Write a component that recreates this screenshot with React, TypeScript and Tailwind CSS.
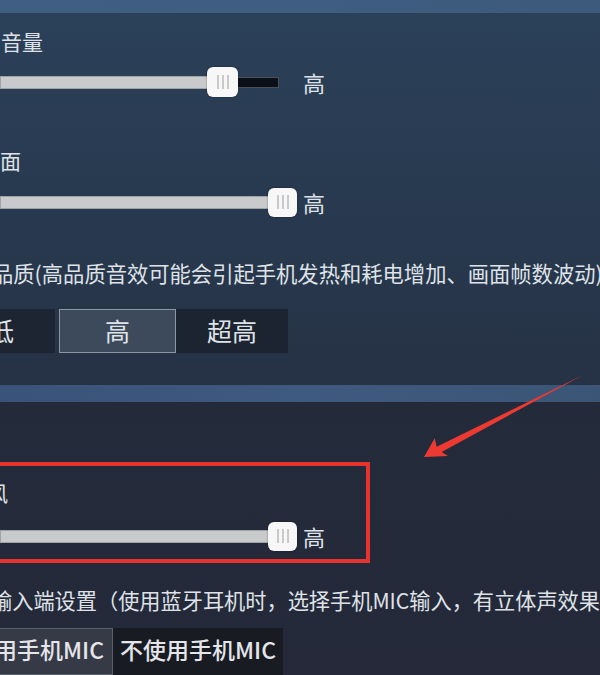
import React from "react";

const font = { fontFamily: '"Noto Sans CJK SC", "Noto Sans", sans-serif' };

function Thumb({ w, h }: { w: number; h: number }) {
  return (
    <div
      className="relative z-10 flex shrink-0 items-center justify-center gap-[3px] rounded-[6px] bg-[#f7f7f7] shadow-[0_0_2px_rgba(0,0,0,0.5)]"
      style={{ width: w, height: h }}
    >
      <div className="h-[14px] w-[2px] bg-[#c9c9c9]" />
      <div className="h-[14px] w-[2px] bg-[#c9c9c9]" />
      <div className="h-[14px] w-[2px] bg-[#c9c9c9]" />
    </div>
  );
}

function Label({ text, className = "" }: { text: string; className?: string }) {
  return (
    <div className={`flex h-[28px] items-center whitespace-nowrap leading-none text-[#dfe3e8] ${className}`}>
      {text}
    </div>
  );
}

function FullSlider() {
  return (
    <div className="flex h-[30px] items-center">
      <div className="-mr-[2px] h-[13px] w-[270px] shrink-0 border border-[#9ea3a8] bg-[#c8cacc]" />
      <Thumb w={29} h={29} />
      <div className="ml-[6px] text-[22px] leading-none text-[#dfe3e8]">高</div>
    </div>
  );
}

export default function App() {
  return (
    <div
      className="relative h-[675px] w-[600px] overflow-hidden bg-[#232a38]"
      style={font}
    >
      <div className="h-[13px] bg-gradient-to-r from-[#3f5f82] to-[#3d5a7c]" />
      <div className="h-[372px] bg-gradient-to-b from-[#2b4059] via-[#283a50] to-[#263245]">
        <div className="flex flex-col">
          <Label text="音量" className="mt-[14px] ml-[1px] text-[21px]" />
          <div className="mt-[12px] flex h-[30px] items-center">
            <div className="-mr-[1px] h-[13px] w-[208px] shrink-0 border border-[#9ea3a8] bg-[#c8cacc]" />
            <Thumb w={31} h={30} />
            <div className="-ml-[1px] h-[11px] w-[42px] shrink-0 border border-[#4a5058] bg-[#0b1016]" />
            <div className="ml-[24px] text-[22px] leading-none text-[#dfe3e8]">高</div>
          </div>
          <Label text="面" className="mt-[49px] text-[21px]" />
          <div className="mt-[13px]">
            <FullSlider />
          </div>
          <Label
            text="品质(高品质音效可能会引起手机发热和耗电增加、画面帧数波动)"
            className="mt-[42px] -ml-[8px] text-[21.3px]"
          />
          <div className="mt-[22px] flex h-[44px] items-stretch text-[25px] text-[#dfe3e8]">
            <div className="-ml-[52px] flex w-[107px] items-center justify-center bg-[#1c2531]">低</div>
            <div className="ml-[4px] flex w-[117px] items-center justify-center border border-[#8d97a2] bg-[#3d4a5b]">高</div>
            <div className="flex w-[112px] items-center justify-center bg-[#1b2430]">超高</div>
          </div>
        </div>
      </div>
      <div className="h-[17px] bg-gradient-to-r from-[#3a5378] via-[#3e5a7e] to-[#3b5576]" />
      <div className="flex h-[273px] flex-col bg-gradient-to-b from-[#232b3a] to-[#25293a]">
        <div className="mt-[60px] -ml-[14px] flex h-[101px] w-[384px] flex-col border-[4px] border-[#e8322d] pl-[14px]">
          <Label text="风" className="mt-[12px] -ml-[17px] text-[21px]" />
          <div className="mt-[15px] -ml-[4px]">
            <FullSlider />
          </div>
        </div>
        <Label
          text="输入端设置（使用蓝牙耳机时，选择手机MIC输入，有立体声效果）"
          className="mt-[23px] -ml-[9px] text-[21.2px]"
        />
        <div className="mt-[14px] flex h-[47px] items-stretch text-[23px] text-[#e4e6ea]">
          <div className="-ml-[38px] flex w-[151px] items-center justify-center border border-[#5a5f6c] bg-[#363a46] pb-[4px] font-medium">
            使用手机MIC
          </div>
          <div className="flex w-[170px] items-center justify-center bg-[#191b23] pb-[4px] font-medium">
            不使用手机MIC
          </div>
        </div>
      </div>
      <svg
        className="pointer-events-none absolute left-0 top-0"
        width="600"
        height="675"
        viewBox="0 0 600 675"
      >
        <polygon
          points="424,457 448,456 441.7,452 583,375 436.7,446.7 434.7,438.2"
          fill="#ec3a33"
        />
      </svg>
    </div>
  );
}
